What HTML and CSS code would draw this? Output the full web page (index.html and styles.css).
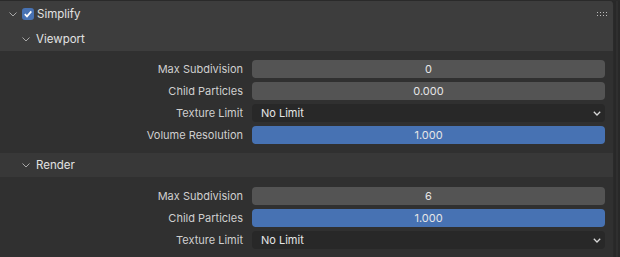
FILE: index.html
```html
<!DOCTYPE html>
<html lang="en">
<head>
  <meta charset="UTF-8" />
  <title>Simplify</title>
  <link rel="stylesheet" href="styles.css">
</head>
<body>
  <div class="editor">
    <div class="panel">
      <div class="panel-header">
        <svg class="chev" width="8" height="5" viewBox="0 0 8 5"><path d="M0.5 0.5 L4 4 L7.5 0.5" /></svg>
        <span class="check">
          <svg width="10" height="10" viewBox="0 0 10 10"><path d="M1.8 5.2 L4 7.4 L8.3 2.4" /></svg>
        </span>
        <span class="title">Simplify</span>
        <span class="grip">
          <i></i><i></i><i></i><i></i><i></i><i></i><i></i><i></i>
        </span>
      </div>

      <div class="sub">
        <div class="sub-header">
          <svg class="chev" width="8" height="5" viewBox="0 0 8 5"><path d="M0.5 0.5 L4 4 L7.5 0.5" /></svg>
          <span class="title">Viewport</span>
        </div>
        <div class="sub-body">
          <div class="row"><label>Max Subdivision</label><div class="field num">0</div></div>
          <div class="row"><label>Child Particles</label><div class="field num">0.000</div></div>
          <div class="row"><label>Texture Limit</label>
            <div class="field menu">No Limit
              <svg width="8" height="5" viewBox="0 0 8 5"><path d="M0.8 0.8 L4 4 L7.2 0.8" /></svg>
            </div>
          </div>
          <div class="row"><label>Volume Resolution</label><div class="field slider">1.000</div></div>
        </div>
      </div>

      <div class="sub">
        <div class="sub-header render">
          <svg class="chev" width="8" height="5" viewBox="0 0 8 5"><path d="M0.5 0.5 L4 4 L7.5 0.5" /></svg>
          <span class="title">Render</span>
        </div>
        <div class="sub-body last">
          <div class="row"><label>Max Subdivision</label><div class="field num">6</div></div>
          <div class="row"><label>Child Particles</label><div class="field slider">1.000</div></div>
          <div class="row"><label>Texture Limit</label>
            <div class="field menu">No Limit
              <svg width="8" height="5" viewBox="0 0 8 5"><path d="M0.8 0.8 L4 4 L7.2 0.8" /></svg>
            </div>
          </div>
        </div>
      </div>
    </div>
    <div class="scroll"></div>
  </div>
</body>
</html>
```

FILE: styles.css
```css
* {
  box-sizing: border-box;
}

body {
  margin: 0;
  background: #282828;
  font-family: Inter, "DejaVu Sans", sans-serif;
  font-size: 11px;
  color: #e0e0e0;
}

.editor {
  display: flex;
  height: 257px;
  overflow: hidden;
  border-top: 1px solid #2a2a2a;
}

.panel {
  width: 614px;
  background: #303030;
  border-top-right-radius: 4px;
  overflow: hidden;
  border-right: 1px solid #2a2a2a;
}

.scroll {
  flex: 1;
  display: flex;
  justify-content: center;
}

.scroll::before {
  content: "";
  width: 2px;
  margin-left: 0;
  background: #2f2f2f;
}

.chev {
  fill: none;
  stroke: #a8a8a8;
  stroke-width: 1;
}

.panel-header {
  height: 26px;
  background: #3d3d3d;
  display: flex;
  align-items: center;
  padding-left: 9px;
}

.panel-header .chev {
  margin-right: 5px;
}

.check {
  width: 12px;
  height: 12px;
  border-radius: 3px;
  background: #4772b3;
  display: flex;
  align-items: center;
  justify-content: center;
  margin-right: 3px;
}

.check svg {
  fill: none;
  stroke: #fff;
  stroke-width: 1.7;
}

.title {
  color: #e2e2e2;
  font-size: 11.5px;
}

.grip {
  margin-left: auto;
  margin-right: 6px;
  display: grid;
  grid-template-columns: repeat(4, 1px);
  grid-template-rows: repeat(2, 1px);
  gap: 2px 2px;
  margin-top: -1px;
}

.grip i {
  width: 1px;
  height: 1px;
  background: #bdbdbd;
}

.sub-header {
  height: 24px;
  background: #3d3d3d;
  display: flex;
  align-items: center;
  padding-left: 22px;
}

.sub-header .chev {
  margin-right: 6px;
}

.sub-header.render {
  background: #383838;
}

.sub-body {
  padding: 9px 8px 9px 0;
  display: flex;
  flex-direction: column;
  gap: 4px;
}

.sub-body.last {
  padding-top: 10px;
}

.row {
  display: flex;
  align-items: center;
  height: 18px;
}

.row label {
  width: 244px;
  text-align: right;
  padding-right: 1px;
  color: #cfcfcf;
}

.field {
  margin-left: 8px;
  flex: 1;
  height: 18px;
  border-radius: 4px;
  display: flex;
  align-items: center;
  justify-content: center;
  color: #e6e6e6;
}

.field.num {
  background: #545454;
}

.field.slider {
  background: #4772b3;
}

.field.menu {
  background: #282828;
  justify-content: space-between;
  padding: 0 4px 0 9px;
}

.field.menu svg {
  fill: none;
  stroke: #d8d8d8;
  stroke-width: 1.3;
}
```
